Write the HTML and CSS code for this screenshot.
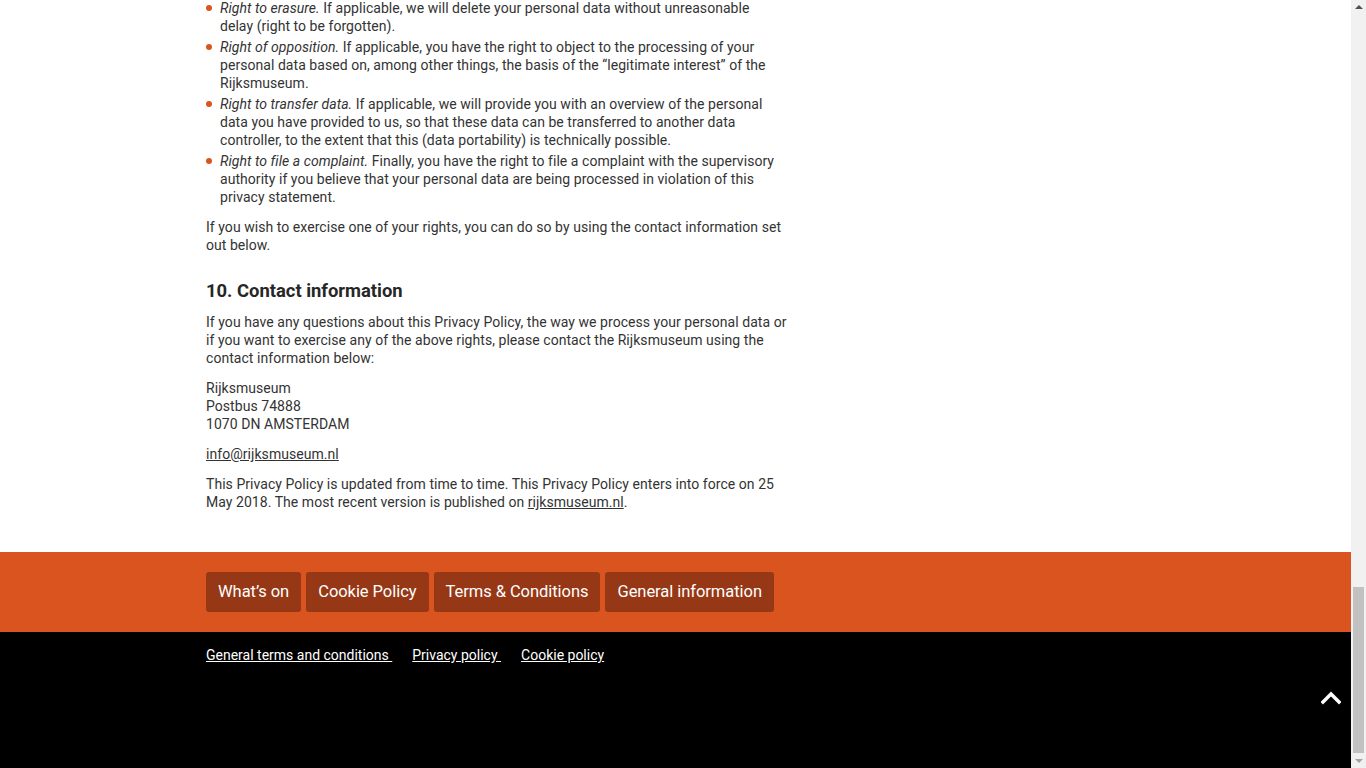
FILE: index.html
```html
<!DOCTYPE html>
<html lang="en">
<head>
<meta charset="utf-8">
<title>Privacy Policy - Rijksmuseum</title>
<link rel="stylesheet" href="styles.css">
</head>
<body>
<div class="page">
<main class="content">
  <ul class="rights">
    <li><em>Right to erasure.</em> If applicable, we will delete your personal data without unreasonable delay (right to be forgotten).</li>
    <li><em>Right of opposition.</em> If applicable, you have the right to object to the processing of your personal data based on, among other things, the basis of the “legitimate interest” of the Rijksmuseum.</li>
    <li><em>Right to transfer data.</em> If applicable, we will provide you with an overview of the personal data you have provided to us, so that these data can be transferred to another data controller, to the extent that this (data portability) is technically possible.</li>
    <li><em>Right to file a complaint.</em> Finally, you have the right to file a complaint with the supervisory authority if you believe that your personal data are being processed in violation of this privacy statement.</li>
  </ul>
  <p>If you wish to exercise one of your rights, you can do so by using the contact information set out below.</p>
  <h2>10. Contact information</h2>
  <p>If you have any questions about this Privacy Policy, the way we process your personal data or if you want to exercise any of the above rights, please contact the Rijksmuseum using the contact information below:</p>
  <p>Rijksmuseum<br>Postbus 74888<br>1070 DN AMSTERDAM</p>
  <p><a href="#">info@rijksmuseum.nl</a></p>
  <p>This Privacy Policy is updated from time to time. This Privacy Policy enters into force on 25 May 2018. The most recent version is published on <a href="#">rijksmuseum.nl</a>.</p>
</main>
<nav class="footer-nav">
  <a class="btn" href="#">What’s on</a>
  <a class="btn" href="#">Cookie Policy</a>
  <a class="btn" href="#">Terms &amp; Conditions</a>
  <a class="btn" href="#">General information</a>
</nav>
<footer class="footer-legal">
  <a href="#">General terms and conditions&nbsp;</a>
  <a href="#">Privacy policy&nbsp;</a>
  <a href="#">Cookie policy</a>
</footer>
</div>
<a class="to-top" href="#" aria-label="Back to top">
  <svg width="20" height="14" viewBox="0 0 20 14"><polyline points="2,11 10,3 18,11" fill="none" stroke="#fff" stroke-width="3.4" stroke-linecap="square"/></svg>
</a>
<div class="scrollbar" aria-hidden="true">
  <span class="sb-up"></span>
  <span class="sb-thumb"></span>
  <span class="sb-down"></span>
</div>
</body>
</html>
```
FILE: styles.css
```css
html, body { overflow: hidden; }
body {
  margin: 0;
  font-family: Roboto, "Liberation Sans", sans-serif;
  font-size: 14px;
  line-height: 18px;
  letter-spacing: 0.05px;
  color: #333;
  background: #fff;
}
.page { margin-right: 15px; }
.content {
  width: 584px;
  padding: 0 0 41px 206px;
  margin-top: -1px;
}
.rights {
  list-style: none;
  margin: 0 0 12px 0;
  padding: 0 6px 0 14px;
}
.rights li {
  position: relative;
  margin-bottom: 3px;
}
.rights li:last-child { margin-bottom: 0; }
.rights li::before {
  content: "";
  position: absolute;
  left: -14px;
  top: 6px;
  width: 6px;
  height: 6px;
  border-radius: 50%;
  background: #d9541e;
}
p { margin: 0 0 12px 0; }
p:last-child { margin-bottom: 0; }
h2 {
  margin: 25px 0 10px 0;
  font-size: 18.4px;
  line-height: 24px;
  font-weight: 700;
  color: #262626;
  letter-spacing: 0;
}
a { color: #333; }
.footer-nav {
  background: #d9541e;
  padding: 20px 0 20px 206px;
  display: flex;
  gap: 5px;
}
.btn {
  display: block;
  background: #963816;
  color: #fff;
  text-decoration: none;
  font-size: 16.5px;
  letter-spacing: -0.05px;
  line-height: 39px;
  height: 40px;
  padding: 0 12px;
  border-radius: 3px;
}
.footer-legal {
  background: #000;
  height: 136px;
  box-sizing: border-box;
  padding: 14px 0 0 206px;
  display: flex;
  gap: 20px;
  align-items: flex-start;
}
.footer-legal a {
  color: #fff;
  font-size: 14px;
  line-height: 18px;
  letter-spacing: 0;
}
.to-top {
  position: fixed;
  right: 25px;
  bottom: 63px;
  display: block;
  width: 20px;
  height: 14px;
}
.to-top svg { display: block; }
.scrollbar {
  position: fixed;
  top: 0;
  right: 0;
  width: 15px;
  height: 100%;
  background: #f1f1f1;
}
.sb-up, .sb-down {
  position: absolute;
  left: 4px;
  width: 0;
  height: 0;
  border-left: 4px solid transparent;
  border-right: 4px solid transparent;
}
.sb-up { top: 5px; border-bottom: 4px solid #505050; }
.sb-down { bottom: 5px; border-top: 4px solid #a3a3a3; }
.sb-thumb {
  position: absolute;
  left: 2px;
  right: 2px;
  top: 587px;
  bottom: 15px;
  background: #c1c1c1;
}
```
